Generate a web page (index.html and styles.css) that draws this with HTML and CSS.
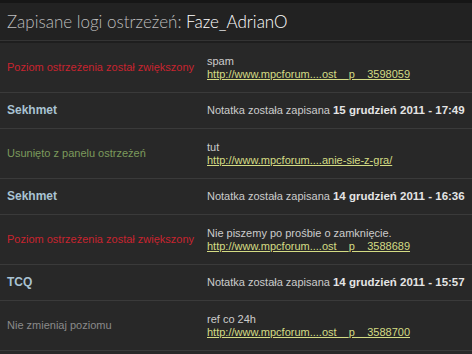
FILE: index.html
```html
<!DOCTYPE html>
<html lang="pl">
<head>
  <meta charset="UTF-8">
  <title>Zapisane logi ostrzeżeń</title>
  <link rel="stylesheet" href="styles.css">
</head>
<body>
  <div class="warn-logs">
    <div class="logs-header">
      <h2>Zapisane logi ostrzeżeń: <span class="member">Faze_AdrianO</span></h2>
    </div>

    <div class="log-row entry">
      <div class="action raised">Poziom ostrzeżenia został zwiększony</div>
      <div class="reason">
        <div>spam</div>
        <a href="#">http://www.mpcforum....ost__p__3598059</a>
      </div>
    </div>
    <div class="log-row note">
      <div class="author">Sekhmet</div>
      <div class="saved">Notatka została zapisana <b>15 grudzień 2011 - 17:49</b></div>
    </div>

    <div class="log-row entry">
      <div class="action removed">Usunięto z panelu ostrzeżeń</div>
      <div class="reason">
        <div>tut</div>
        <a href="#">http://www.mpcforum....anie-sie-z-gra/</a>
      </div>
    </div>
    <div class="log-row note">
      <div class="author">Sekhmet</div>
      <div class="saved">Notatka została zapisana <b>14 grudzień 2011 - 16:36</b></div>
    </div>

    <div class="log-row entry">
      <div class="action raised">Poziom ostrzeżenia został zwiększony</div>
      <div class="reason">
        <div>Nie piszemy po prośbie o zamknięcie.</div>
        <a href="#">http://www.mpcforum....ost__p__3588689</a>
      </div>
    </div>
    <div class="log-row note">
      <div class="author">TCQ</div>
      <div class="saved">Notatka została zapisana <b>14 grudzień 2011 - 15:57</b></div>
    </div>

    <div class="log-row entry">
      <div class="action same">Nie zmieniaj poziomu</div>
      <div class="reason">
        <div>ref co 24h</div>
        <a href="#">http://www.mpcforum....ost__p__3588700</a>
      </div>
    </div>
  </div>
</body>
</html>
```

FILE: styles.css
```css
body, html {
  margin: 0;
  padding: 0;
  background-color: #282828;
  font-family: 'Liberation Sans', Arial, sans-serif;
  font-size: 11px;
  color: #cccccc;
}

.warn-logs {
  border-top: 3px solid #161616;
}

.logs-header {
  background-color: #222222;
  border-bottom: 2px solid #1e1e1e;
  box-shadow: inset 0 -1px 0 #343434;
  padding: 0 7px;
  height: 38px;
  display: flex;
  align-items: center;
}

.logs-header h2 {
  margin: 0 0 1px;
  font-family: 'Lato', sans-serif;
  font-weight: 300;
  font-size: 17px;
  color: #bdbdbd;
}

.logs-header .member {
  color: #ffffff;
}

.log-row {
  display: grid;
  grid-template-columns: 200px 1fr;
  align-items: center;
  padding: 0 7px;
  border-bottom: 1px solid #3a3a3a;
  line-height: 13px;
  white-space: nowrap;
}

.log-row.entry {
  height: 49px;
}

.log-row.note {
  height: 35px;
}

.action.raised {
  color: #c8242f;
}

.action.removed {
  color: #7c9a5c;
}

.action.same {
  color: #8a8a8a;
}

.reason a {
  color: #d4dc84;
  text-decoration: underline;
}

.author {
  font-weight: bold;
  font-size: 12px;
  color: #a9c3d3;
}

.saved b {
  color: #e4e4e4;
  font-size: 11.5px;
}
```
